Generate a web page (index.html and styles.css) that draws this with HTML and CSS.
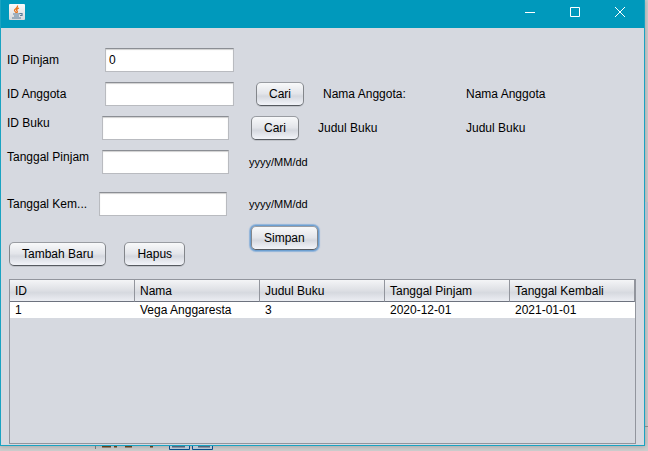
FILE: index.html
```html
<!DOCTYPE html>
<html lang="id">
<head>
<meta charset="utf-8">
<title>Peminjaman</title>
<link rel="stylesheet" href="styles.css">
</head>
<body>
<main class="window">
  <header class="titlebar">
    <svg class="app-icon" width="16" height="16" viewBox="0 0 16 16" aria-hidden="true">
      <defs><linearGradient id="tile" x2="0" y2="1"><stop stop-color="#fbfbfb"/><stop offset="1" stop-color="#d5d8dc"/></linearGradient></defs>
      <rect width="16" height="16" rx="1" fill="url(#tile)"/>
      <path d="M8.500 1.500C9.500 4 5 5 5.500 6.500C5.700 7.600 7 8 7.300 9M10 4C7.500 5 7 6 8.200 7.200Q8.800 8 7.800 8.800" fill="none" stroke="#e8731c" stroke-width="1.300"/>
      <path d="M4 10H10.500M5 12H10M3 14H12M10.500 9.500H13V11.500H11" fill="none" stroke="#5a7c98" stroke-width="1.200"/>
    </svg>
    <div class="controls">
      <button type="button" class="control" aria-label="Minimize"><svg width="10" height="10" viewBox="0 0 10 10"><path d="M0 5.500H10"/></svg></button>
      <button type="button" class="control" aria-label="Maximize"><svg width="10" height="10" viewBox="0 0 10 10"><path d="M.5.5H9.500V9.500H.5Z"/></svg></button>
      <button type="button" class="control" aria-label="Close"><svg width="10" height="10" viewBox="0 0 10 10"><path d="M0 0L10 10M10 0L0 10"/></svg></button>
    </div>
  </header>
  <form class="content">
    <div class="row">
      <label class="label label-wide" for="id-pinjam">ID Pinjam</label>
      <input class="field" id="id-pinjam" type="text" value="0">
    </div>
    <div class="row">
      <label class="label label-wide" for="id-anggota">ID Anggota</label>
      <input class="field" id="id-anggota" type="text">
      <div class="aside">
        <button type="button" class="button">Cari</button>
        <span class="caption">Nama Anggota:</span>
      </div>
      <output class="result" for="id-anggota">Nama Anggota</output>
    </div>
    <div class="row">
      <label class="label label-raised" for="id-buku">ID Buku</label>
      <input class="field" id="id-buku" type="text">
      <div class="aside">
        <button type="button" class="button">Cari</button>
        <span class="caption">Judul Buku</span>
      </div>
      <output class="result" for="id-buku">Judul Buku</output>
    </div>
    <div class="row">
      <label class="label label-raised" for="tgl-pinjam">Tanggal Pinjam</label>
      <input class="field" id="tgl-pinjam" type="text">
      <span class="hint">yyyy/MM/dd</span>
    </div>
    <div class="row row-last">
      <label class="label label-narrow" for="tgl-kembali">Tanggal Kem...</label>
      <input class="field" id="tgl-kembali" type="text">
      <span class="hint">yyyy/MM/dd</span>
    </div>
    <div class="actions">
      <div class="secondary">
        <button type="button" class="button">Tambah Baru</button>
        <button type="button" class="button">Hapus</button>
      </div>
      <button type="button" class="button button-default">Simpan</button>
    </div>
    <div class="table-pane">
      <table class="loans">
        <thead><tr><th>ID</th><th>Nama</th><th>Judul Buku</th><th>Tanggal Pinjam</th><th>Tanggal Kembali</th></tr></thead>
        <tbody><tr><td>1</td><td>Vega Anggaresta</td><td>3</td><td>2020-12-01</td><td>2021-01-01</td></tr></tbody>
      </table>
    </div>
  </form>
</main>
<div class="edge" aria-hidden="true"><span class="edge-mark"></span><span class="edge-line"></span></div>
<div class="desktop" aria-hidden="true">
  <svg width="216" height="5" viewBox="0 0 216 5">
    <path d="M95.500 0V3" stroke="#777"/>
    <path d="M102 .5H111M114 .5H117M125 .5H132M150 .5H153" stroke="#63401e" stroke-width="2"/>
    <path d="M169.500 0V3.500H189.500V0M192.500 0V3.500H212.500V0" fill="#b9c6d2" stroke="#0b4f8a"/>
    <path d="M172 .5H185M198 .5H210" stroke="#536579" stroke-width="2"/>
  </svg>
</div>
</body>
</html>
```
FILE: styles.css
```css
* { box-sizing: border-box; }

body {
  margin: 0;
  min-height: 100vh;
  display: grid;
  grid-template-columns: 1fr 3px;
  grid-template-rows: 1fr 5px;
  background: #cdcdcd;
  color: #000;
  font: 12px/16px "Liberation Sans", Arial, sans-serif;
}

button, input { font: inherit; color: inherit; }

.window {
  display: flex;
  flex-direction: column;
  border: 1px solid #1aa3c2;
  border-top: 0;
  background: #d6d9e0;
  box-shadow: 0 0 5px rgba(0, 0, 0, .25);
}

.titlebar {
  display: flex;
  justify-content: space-between;
  height: 28px;
  padding: 0 2px 0 8px;
  background: #0099bc;
}

.app-icon { margin-top: 4px; }

.controls { display: flex; }

.control {
  width: 45px;
  height: 24px;
  padding: 0;
  border: 0;
  background: none;
}

.control svg {
  display: block;
  margin: auto;
  fill: none;
  stroke: #fff;
}

.content {
  flex: 1;
  display: flex;
  flex-direction: column;
  padding: 20px 8px 1px;
}

.row {
  display: flex;
  align-items: center;
  height: 24px;
  margin: 0 0 10px -2px;
}

.row-last { margin-top: 8px; }

.label {
  flex: none;
  width: 95px;
  white-space: nowrap;
}

.label-wide { width: 98px; }
.label-narrow { width: 92px; }

.label-raised {
  align-self: flex-start;
  margin-top: -1px;
}

.field {
  width: 128px;
  height: 24px;
  padding: 2px 3px;
  border: 1px solid #b9bbc0;
  border-top-color: #8b8e94;
  border-radius: 0;
  background: #fff;
  box-shadow: inset 0 1px 1px #d0d0d0;
}

.label-wide + .field { width: 129px; }
.label-raised + .field { width: 127px; }

.aside {
  display: flex;
  align-items: center;
  gap: 19px;
  margin-left: 22px;
}

.result {
  margin-left: auto;
  width: 170px;
}

.hint {
  margin-left: 20px;
  font-size: 11px;
}

.row-last .hint { margin-left: 22px; }

.button {
  height: 24px;
  padding: 0 12px;
  border: 1px solid #83868b;
  border-top-color: #999ca2;
  border-bottom-color: #565a60;
  border-radius: 5px;
  background: linear-gradient(#f8f9fa, #e3e5ea 48%, #d5d8df 60%, #f2f4f9);
  box-shadow: 0 1px 0 #bfc2c8;
}

.button-default { box-shadow: 0 0 0 1px #6d9fd0, 0 0 1px 2px #8fb3da; }

.actions {
  display: flex;
  align-items: flex-start;
}

.secondary {
  display: flex;
  gap: 18px;
  width: 242px;
  margin-top: 16px;
}

.table-pane {
  flex: 1;
  margin-top: 13px;
  border: 1px solid #92959d;
}

.loans {
  width: 100%;
  border-collapse: separate;
  border-spacing: 0;
  table-layout: fixed;
}

.loans th {
  height: 22px;
  padding: 0 5px;
  border-right: 1px solid #92959d;
  border-bottom: 1px solid #6d727e;
  background: linear-gradient(#f4f5f7, #dddfe4 50%, #d6d9df 60%, #eceef3);
  font-weight: normal;
  text-align: left;
}

.loans td {
  height: 16px;
  padding: 0 5px;
  background: #fff;
}

.edge {
  display: flex;
  flex-direction: column;
  justify-content: space-between;
  padding: 202px 0 19px;
}

.edge-mark {
  height: 18px;
  background: #b5bcc8;
}

.edge-line {
  height: 1px;
  background: #888;
}

.desktop { grid-column: 1 / -1; }
.desktop svg { display: block; }
```
